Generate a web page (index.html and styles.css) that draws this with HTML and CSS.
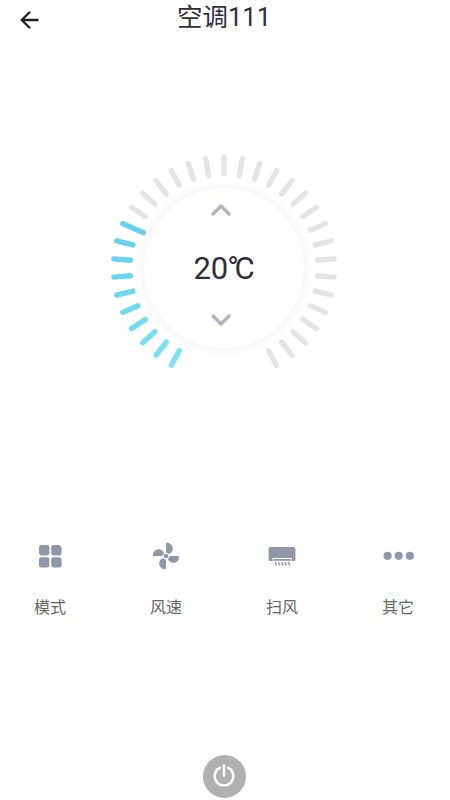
FILE: index.html
```html
<!DOCTYPE html>
<html lang="zh-CN">
<head>
  <meta charset="UTF-8">
  <meta name="viewport" content="width=device-width, initial-scale=1.0">
  <title>空调111</title>
  <link rel="stylesheet" href="styles.css">
</head>
<body>

  <header class="navbar">
    <a class="back" href="#" aria-label="返回">
      <svg width="20" height="20" viewBox="0 0 20 20">
        <path d="M18.5 10H2M10 1.8L1.8 10l8.2 8.2"/>
      </svg>
    </a>
    <h1>空调111</h1>
  </header>

  <main class="dial">
    <svg class="ticks" id="ticks" viewBox="-115 -115 230 230"></svg>
    <div class="knob">
      <button class="step" id="up" aria-label="升温">
        <svg width="20" height="12" viewBox="0 0 20 12"><path d="M2 10l8-8 8 8"/></svg>
      </button>
      <div class="temp"><span id="temp">20</span><span class="degree">°</span>C</div>
      <button class="step" id="down" aria-label="降温">
        <svg width="20" height="12" viewBox="0 0 20 12"><path d="M2 2l8 8 8-8"/></svg>
      </button>
    </div>
  </main>

  <nav class="menu">
    <a href="#">
      <svg width="32" height="32" viewBox="0 0 32 32">
        <rect x="5" y="5" width="10.4" height="10.4" rx="2.4"/>
        <path d="M19.6 5H25l2.6 2.6V13a2.4 2.4 0 0 1-2.4 2.4h-5.6a2.4 2.4 0 0 1-2.4-2.4V7.4A2.4 2.4 0 0 1 19.6 5z"/>
        <rect x="5" y="17.2" width="10.4" height="10.4" rx="2.4"/>
        <rect x="17.2" y="17.2" width="10.4" height="10.4" rx="2.4"/>
      </svg>
      <span>模式</span>
    </a>
    <a href="#">
      <svg width="32" height="32" viewBox="0 0 32 32">
        <circle cx="16" cy="16" r="2.3"/>
        <path id="blade" d="M16 12.500V3.600c0-.6.3-.9.900-.8 3.500.2 6 2.800 5.900 6-.1 2.500-1.500 4.300-4 5.300-.7-.9-1.600-1.500-2.800-1.600z"/>
        <use href="#blade" transform="rotate(90 16 16)"/>
        <use href="#blade" transform="rotate(180 16 16)"/>
        <use href="#blade" transform="rotate(270 16 16)"/>
      </svg>
      <span>风速</span>
    </a>
    <a href="#">
      <svg width="32" height="32" viewBox="0 0 32 32">
        <path d="M4.600 7h22.800a2 2 0 0 1 2 2v10.500a1.500 1.500 0 0 1-1.500 1.500H26v-3H6.500v3H4.100a1.500 1.500 0 0 1-1.500-1.500V9a2 2 0 0 1 2-2z"/>
        <path d="M7.300 19h17.900v1.800H7.300z"/>
        <path class="air" d="M8.800 22.300l1.200 1.300-.3.600 1 1.100M12.100 22.300l1.200 1.300-.3.600 1 1.100M15.400 22.300l1.200 1.300-.3.600 1 1.100M18.700 22.300l1.200 1.300-.3.600 1 1.100M22 22.300l1.200 1.300-.3.600 1 1.100"/>
      </svg>
      <span>扫风</span>
    </a>
    <a href="#">
      <svg width="32" height="32" viewBox="0 0 32 32">
        <circle cx="5.600" cy="15.800" r="4.100"/>
        <circle cx="16.700" cy="15.800" r="4.100"/>
        <circle cx="27.900" cy="15.800" r="4.100"/>
      </svg>
      <span>其它</span>
    </a>
  </nav>

  <footer class="footer">
    <button class="power" aria-label="电源">
      <svg width="24" height="24" viewBox="0 0 24 24">
        <path d="M8 3.700a9.300 9.300 0 1 0 8 0M12 1.500v10"/>
      </svg>
    </button>
  </footer>

  <script src="dial.js"></script>
</body>
</html>
```

FILE: styles.css
```css
* {
  margin: 0;
  padding: 0;
  box-sizing: border-box;
}

body {
  width: 450px;
  height: 800px;
  overflow: hidden;
  background-color: #fff;
  color: #2f2e3c;
  font-family: Roboto, "Noto Sans CJK SC", sans-serif;
}

button {
  border: none;
  background: none;
  cursor: pointer;
}

svg {
  display: block;
  overflow: visible;
}

.navbar {
  display: grid;
  grid-template-columns: 48px 1fr 48px;
  height: 40px;
  padding-left: 20px;
  padding-right: 22px;
}

.navbar .back {
  padding-top: 10px;
}

.back path {
  fill: none;
  stroke: #222;
  stroke-width: 2.3;
}

.navbar h1 {
  font-size: 25.5px;
  font-weight: 400;
  line-height: 34px;
  text-align: center;
}

.dial {
  display: grid;
  justify-content: center;
  width: 448px;
  margin-top: 113px;
}

.ticks,
.knob {
  grid-area: 1 / 1;
}

.ticks {
  width: 230px;
  height: 230px;
}

.ticks line {
  stroke: #e4e4e4;
  stroke-width: 5.4;
  stroke-linecap: round;
}

.knob {
  display: flex;
  flex-direction: column;
  align-items: center;
  justify-content: space-between;
  place-self: center;
  width: 160px;
  height: 160px;
  padding: 16px 0 22px;
  border-radius: 50%;
  background-color: #fff;
  box-shadow: 0 0 12px rgba(0, 0, 0, 0.08);
}

.step {
  margin-right: 6px;
}

.step path {
  fill: none;
  stroke: #b4b3be;
  stroke-width: 3.4;
  stroke-linecap: round;
  stroke-linejoin: round;
}

.temp {
  padding-top: 7px;
  font-size: 31px;
  line-height: 36px;
}

.degree {
  margin-left: -1px;
  letter-spacing: -4.5px;
}

.menu {
  display: grid;
  grid-template-columns: repeat(4, 32px);
  gap: 84px;
  margin-top: 157px;
  padding-left: 34px;
}

.menu a {
  color: #666;
  font-size: 16px;
  line-height: 24px;
  text-decoration: none;
  white-space: nowrap;
}

.menu svg {
  margin-bottom: 24px;
  fill: #8f98aa;
}

.menu .air {
  fill: none;
  stroke: #8f98aa;
  stroke-width: 1.3;
}

.footer {
  width: 448px;
  margin-top: 134.5px;
}

.power {
  display: flex;
  align-items: center;
  justify-content: center;
  width: 43px;
  height: 43px;
  margin: 0 auto;
  border-radius: 50%;
  background-color: #b0b0b0;
}

.power path {
  fill: none;
  stroke: #fff;
  stroke-width: 2.4;
  stroke-linecap: round;
}
```

FILE: dial.js
```js
const ticks = document.getElementById("ticks");
const temp = document.getElementById("temp");
const STEP = 360 / 38;
let active = 9;

// blue gets lighter towards the start of the scale
function tickColor(i) {
  const t = i / 9;
  return `rgb(${Math.round(122 - 22 * t)}, ${Math.round(226 - 18 * t)}, ${Math.round(242 - t)})`;
}

function drawTicks() {
  ticks.innerHTML = "";
  for (let i = 0; i <= 32; i++) {
    const line = document.createElementNS("http://www.w3.org/2000/svg", "line");
    line.setAttribute("y1", -110.5);
    line.setAttribute("y2", i === active ? -88 : -94);
    line.setAttribute("transform", `rotate(${(i - 16) * STEP})`);
    if (i <= active) line.style.stroke = tickColor(i);
    ticks.appendChild(line);
  }
}

function change(n) {
  active = Math.min(32, Math.max(0, active + n));
  temp.textContent = 11 + active;
  drawTicks();
}

document.getElementById("up").addEventListener("click", () => change(1));
document.getElementById("down").addEventListener("click", () => change(-1));
drawTicks();
```
